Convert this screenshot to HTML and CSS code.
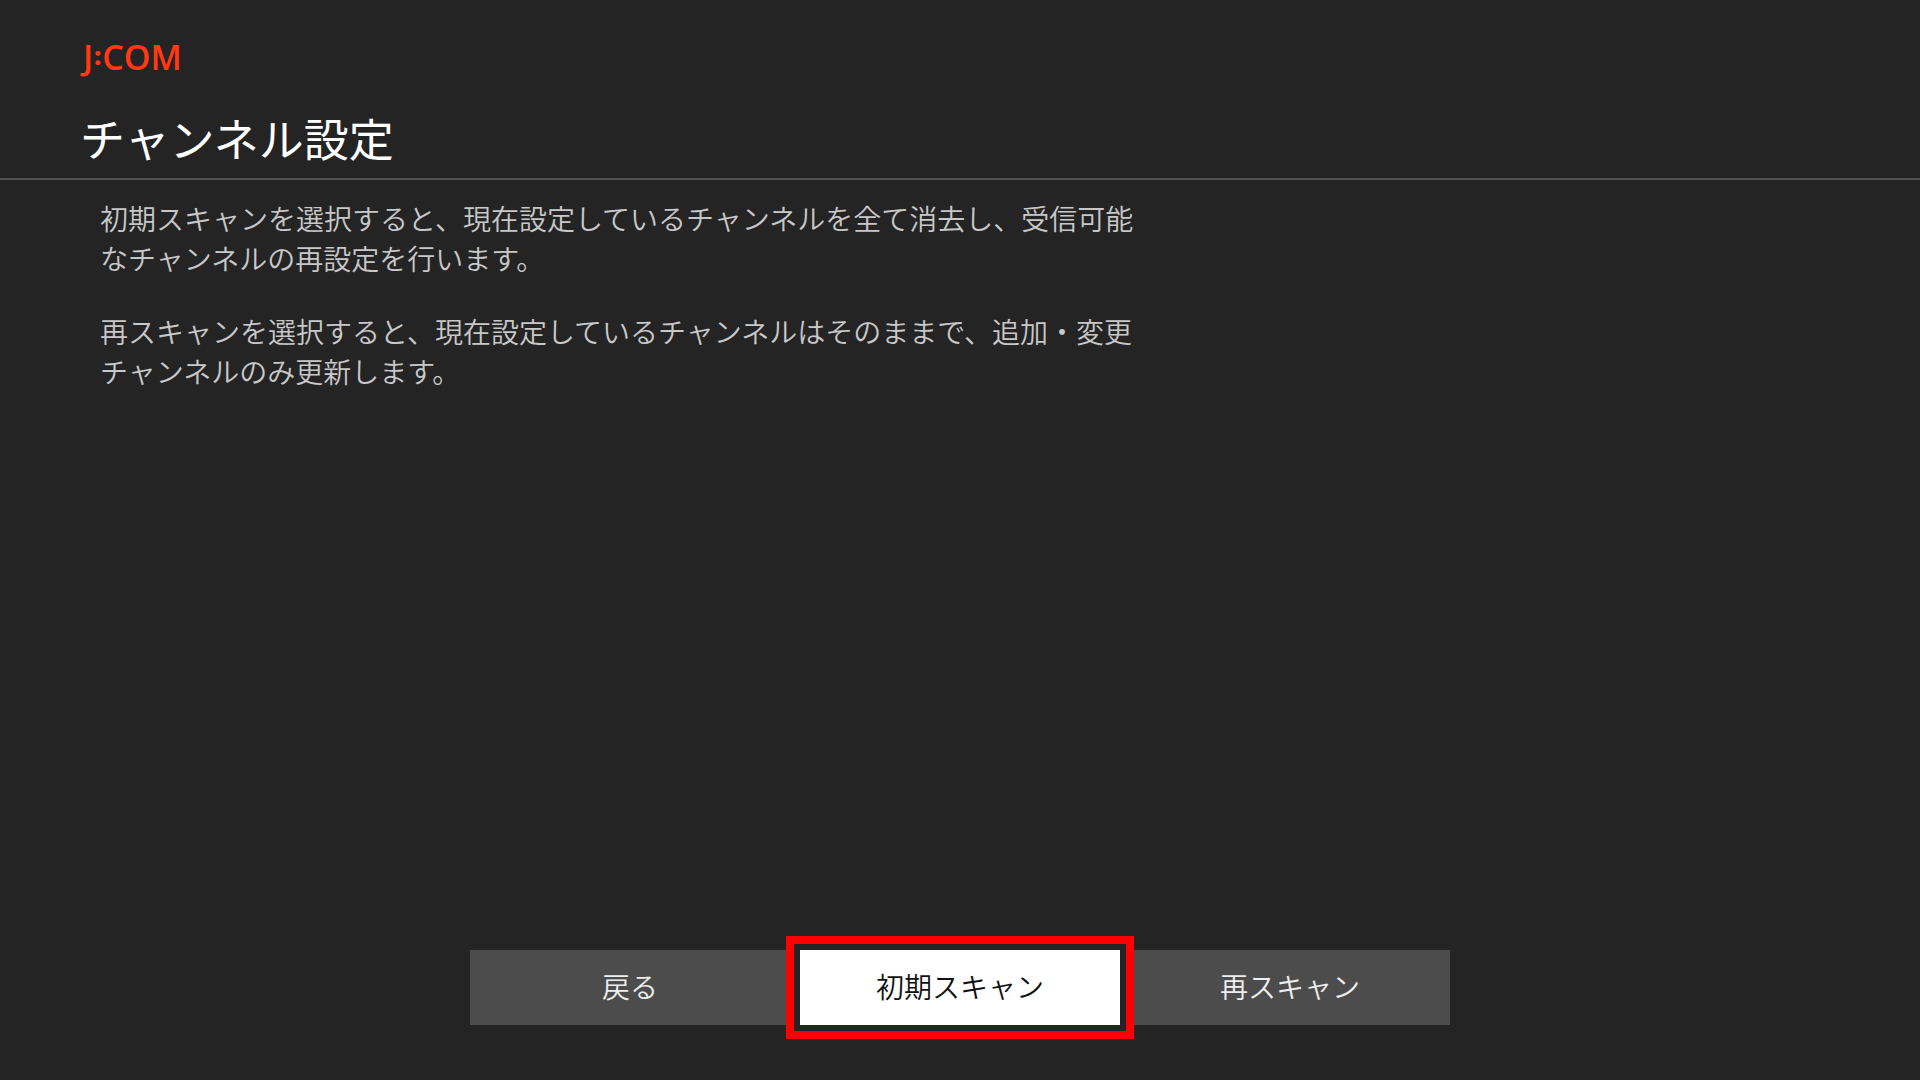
FILE: index.html
```html
<!DOCTYPE html>
<html lang="ja">
<head>
    <meta charset="UTF-8">
    <meta name="viewport" content="width=device-width, initial-scale=1.0">
    <title>チャンネル設定</title>
    <link rel="stylesheet" href="styles.css">
</head>
<body>
    <header class="header">
        <div class="logo">J<span class="colon">:</span>COM</div>
        <h1>チャンネル設定</h1>
    </header>
    <main class="description">
        <p>初期スキャンを選択すると、現在設定しているチャンネルを全て消去し、受信可能なチャンネルの再設定を行います。</p>
        <p>再スキャンを選択すると、現在設定しているチャンネルはそのままで、追加・変更チャンネルのみ更新します。</p>
    </main>
    <footer class="buttons">
        <button type="button">戻る</button>
        <button type="button" class="selected">初期スキャン</button>
        <button type="button">再スキャン</button>
    </footer>
</body>
</html>
```

FILE: styles.css
```css
*{
    margin:0;
    padding:0;
    box-sizing:border-box;
}
body{
    display:flex;
    flex-direction:column;
    min-height:100vh;
    background-color:#242424;
    color:#c8c8c8;
    font-family:"Noto Sans CJK JP", sans-serif;
    font-weight:350;
}
.header{
    padding:35px 80px 8px;
    border-bottom:2px solid #505050;
}
.logo{
    padding-left:3px;
    color:#ff3912;
    font-family:"Open Sans", sans-serif;
    font-size:34px;
    font-weight:650;
    line-height:44px;
}
.logo .colon{
    margin:0 1px;
    font-size:24px;
    font-weight:800;
    line-height:1;
    vertical-align:5px;
}
.header h1{
    margin-top:27px;
    color:#fff;
    font-size:45px;
    font-weight:400;
    line-height:64px;
}
.description{
    max-width:1140px;
    padding:18px 0 40px 100px;
    font-size:28px;
    line-height:40px;
}
.description p + p{
    margin-top:33px;
}
.buttons{
    display:grid;
    grid-template-columns:repeat(3, 1fr);
    gap:10px;
    width:100%;
    max-width:980px;
    margin:auto auto 55px;
}
.buttons button{
    height:75px;
    padding-bottom:4px;
    border:none;
    background-color:#4c4c4c;
    color:#eee;
    font:inherit;
    font-size:28px;
    cursor:pointer;
}
.buttons .selected{
    position:relative;
    background-color:#fff;
    color:#111;
    box-shadow:0 0 0 6px #242424, 0 0 0 14px #f00;
}
```
